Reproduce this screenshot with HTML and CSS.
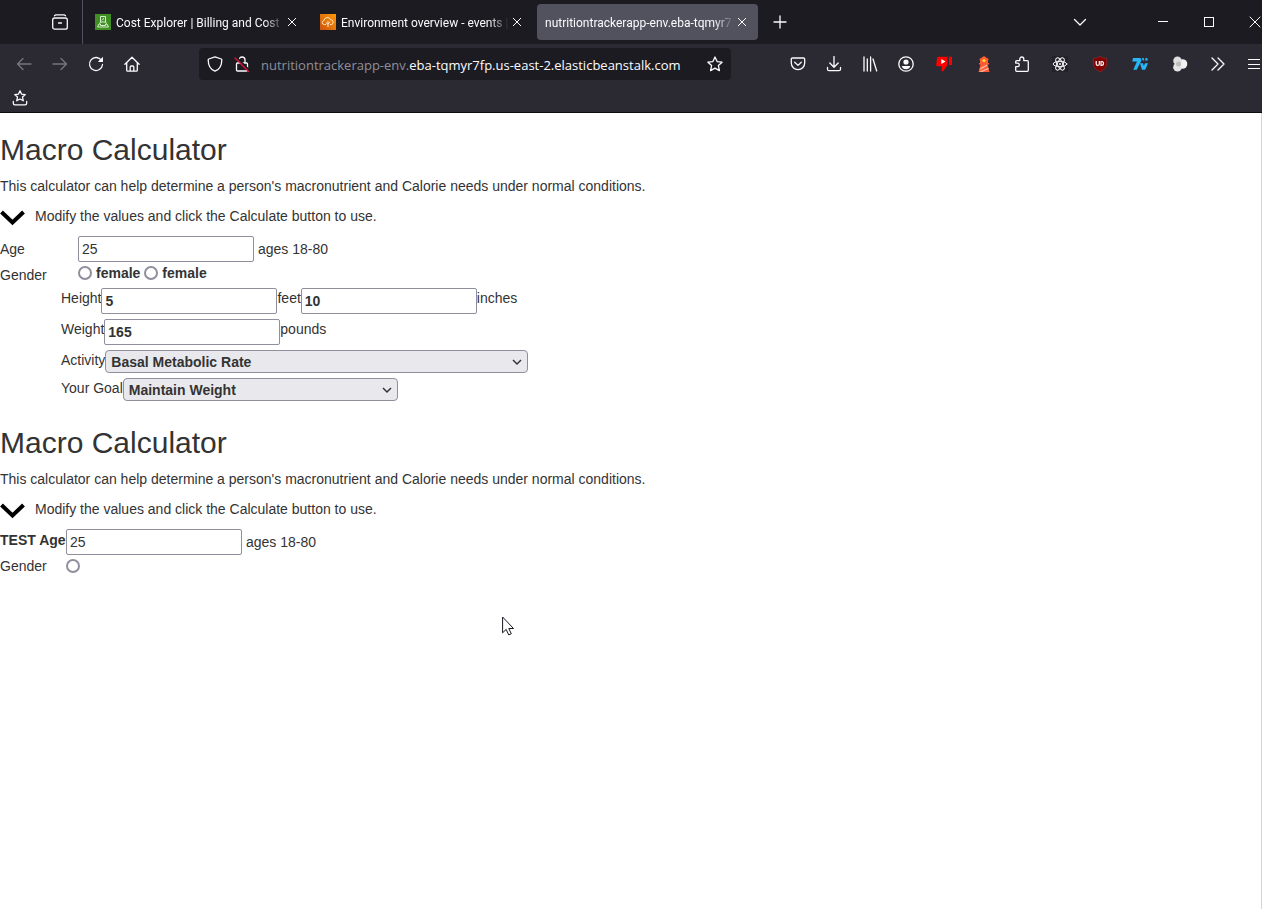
FILE: index.html
```html
<!DOCTYPE html>
<html lang="en">
<head>
<meta charset="utf-8">
<title>Macro Calculator</title>
<link rel="stylesheet" href="styles.css">
</head>
<body>
<header class="browser">
  <div class="tabbar">
    <div class="tabbar-lead">
      <button class="tool" aria-label="Firefox View"><svg class="icon" viewBox="0 0 16 16"><rect x=".7" y="4" width="14.6" height="11.2" rx="2"/><path d="M2.5 1.8 Q3 .8 4.2 .8 H11.8 Q13 .8 13.5 1.8M6.5 9h3"/></svg></button>
    </div>
    <div class="tabs">
      <div class="tab">
        <svg class="favicon" viewBox="0 0 16 16"><rect width="16" height="16" fill="#3f8f25"/><g fill="none" stroke="#d8efcc" stroke-width="1"><path d="M5.500 8V2.500h5V8M4.500 9.500l1-1.500h5l1 1.500M2.500 13l1.500-3h1.500v1.500h5V10H12l1.500 3zM7 6.500l2-2.500"/></g></svg>
        <span class="tab-title">Cost Explorer | Billing and Cost M</span>
        <button class="tab-close" aria-label="Close tab"><svg viewBox="0 0 10 10"><path d="M1 1l8 8M9 1l-8 8"/></svg></button>
      </div>
      <div class="tab">
        <svg class="favicon" viewBox="0 0 16 16"><defs><linearGradient id="amber" x1="0" y1="1" x2="1" y2="0"><stop stop-color="#c9520f"/><stop offset="1" stop-color="#ff9a06"/></linearGradient></defs><rect width="16" height="16" fill="url(#amber)"/><g fill="none" stroke="#ffe4c4"><path d="M6 10.500H4.500a2 2 0 0 1-.5-4 3.500 3.500 0 0 1 6.700-.8 2.500 2.500 0 0 1 1 4.800H10M8 13V7M8 10.500 5.800 8.500M8 10l2.200-2"/></g></svg>
        <span class="tab-title">Environment overview - events |</span>
        <button class="tab-close" aria-label="Close tab"><svg viewBox="0 0 10 10"><path d="M1 1l8 8M9 1l-8 8"/></svg></button>
      </div>
      <div class="tab tab-active">
        <span class="tab-title">nutritiontrackerapp-env.eba-tqmyr7</span>
        <button class="tab-close" aria-label="Close tab"><svg viewBox="0 0 10 10"><path d="M1 1l8 8M9 1l-8 8"/></svg></button>
      </div>
    </div>
    <button class="tool" aria-label="New tab"><svg class="icon" viewBox="0 0 16 16"><path d="M8 2v12M2 8h12"/></svg></button>
    <button class="tool list-tabs" aria-label="List all tabs"><svg class="icon" viewBox="0 0 16 16"><path d="M2.500 5.500 8 11l5.500-5.500"/></svg></button>
    <div class="window-controls">
      <button class="window-button" aria-label="Minimize"><svg class="icon sharp" viewBox="0 0 16 16"><path d="M3 7.500h10"/></svg></button>
      <button class="window-button" aria-label="Maximize"><svg class="icon sharp" viewBox="0 0 16 16"><path d="M3.500 3.500h9v9h-9z"/></svg></button>
      <button class="window-button" aria-label="Close window"><svg class="icon" viewBox="0 0 16 16"><path class="thin" d="M3 3l10 10M13 3 3 13"/></svg></button>
    </div>
  </div>
  <div class="toolbar">
    <nav class="tools">
      <button class="tool dim" aria-label="Back"><svg class="icon" viewBox="0 0 16 16"><path d="M15 8H1.500M7 2.500 1.500 8 7 13.500"/></svg></button>
      <button class="tool dim" aria-label="Forward"><svg class="icon" viewBox="0 0 16 16"><path d="M1 8h13.500M9 2.500 14.500 8 9 13.500"/></svg></button>
      <button class="tool" aria-label="Reload"><svg class="icon" viewBox="0 0 16 16"><path d="M13.500 4.500A6.500 6.500 0 1 0 14.500 8.500"/><path class="solid" d="M15 .8V6H9.800z"/></svg></button>
      <button class="tool" aria-label="Home"><svg class="icon" viewBox="0 0 16 16"><path d="M.9 8.200 8 1.300l7.100 6.900M2.700 7v7.200q0 1 1 1h8.600q1 0 1-1V7M6.200 15v-4q0-1 1-1h1.600q1 0 1 1v4"/></svg></button>
    </nav>
    <div class="urlbar">
      <svg class="icon" viewBox="0 0 16 16"><path d="M8 .9 14.300 3q.5.200.5.700C14.800 9.500 12.500 13.500 8 15.200 3.500 13.500 1.200 9.500 1.200 3.700q0-.5.500-.7z"/></svg>
      <svg class="icon" viewBox="0 0 16 16"><path d="M5 7V4a3 3 0 0 1 6 0v3M3.500 7h9q1 0 1 1v6q0 1-1 1h-9q-1 0-1-1V8q0-1 1-1z"/><path class="slash-gap" d="M2 1l13 13"/><path class="slash" d="M1 2l13.500 13.500"/></svg>
      <span class="url"><span class="url-dim">nutritiontrackerapp-env.</span>eba-tqmyr7fp.us-east-2.elasticbeanstalk.com</span>
      <button class="star" aria-label="Bookmark this page"><svg class="icon" viewBox="0 0 16 16"><path d="M8 1l2.100 4.600 5 .6-3.700 3.400 1 5L8 12.100l-4.400 2.500 1-5L.9 6.200l5-.6z"/></svg></button>
    </div>
    <div class="tools tools-end">
      <button class="tool" aria-label="Save to Pocket"><svg class="icon" viewBox="0 0 16 16"><path d="M2.500 2h11Q14.700 2 14.700 3.200V7a6.700 6.700 0 0 1-13.400 0V3.200Q1.300 2 2.500 2zM4.700 6.300 8 9.400l3.300-3.100"/></svg></button>
      <button class="tool" aria-label="Downloads"><svg class="icon" viewBox="0 0 16 16"><path d="M8 .5v10.500M3.800 7 8 11.200 12.200 7M1.500 11.500v1.700q0 1.500 1.500 1.500h10q1.500 0 1.500-1.500v-1.700"/></svg></button>
      <button class="tool" aria-label="Library"><svg class="icon" viewBox="0 0 16 16"><path d="M2 1v14M5.300 3v12M8.600 1v14M11 3l3.700 12"/></svg></button>
      <button class="tool" aria-label="Account"><svg class="icon" viewBox="0 0 16 16"><circle cx="8" cy="8" r="7.200"/><circle class="solid" cx="8" cy="6" r="2.600"/><path class="solid" d="M3.700 10h8.600q-1 3.200-4.300 3.200T3.700 10z"/></svg></button>
      <button class="tool wide" aria-label="Return YouTube Dislike"><svg class="icon bare" viewBox="0 0 16 16"><path fill="#f00" d="M2.500.8H11.500v8.200L7 15.500q-2-.5-1.500-2.500l.7-2.700H1.500Q0 10 .2 8.500L1 2.500Q1.200.8 2.500.8zM13 .8h3V9h-3z"/><path fill="#fff" d="M5.300 3v5L9.500 5.500z"/></svg></button>
      <button class="tool wide" aria-label="Lighthouse"><svg class="icon bare" viewBox="0 0 16 16"><path fill="#ff5a32" d="M8 0l4.500 3v1H12v3H4V4h-.5V3zM3 7h10v1.500H3zM4.500 8.500h7L13.500 16h-11z"/><circle cx="8" cy="4.600" r="1.700" fill="#ffd22e"/><path fill="#ffb39c" d="M4.300 12 11 8.500l.5 1.300-7.500 4zM3 15.800l9.500-4 .3 1.300L6 16z"/></svg></button>
      <button class="tool" aria-label="Extensions"><svg class="icon" viewBox="0 0 16 16"><path d="M1.700 14.300V10.700H3.500a1.800 1.800 0 0 0 0-3.600H1.700V5.700q0-1 1-1H5.800V3a2 2 0 0 1 4 0v1.700h3.500q1 0 1 1v8.600q0 1-1 1H2.700q-1 0-1-1z"/></svg></button>
      <button class="tool wide" aria-label="React Developer Tools"><svg class="icon atom" viewBox="0 0 16 16"><rect class="atom-back" width="16" height="16"/><ellipse cx="8" cy="8" rx="6.800" ry="2.700"/><ellipse cx="8" cy="8" rx="6.800" ry="2.700" transform="rotate(60 8 8)"/><ellipse cx="8" cy="8" rx="6.800" ry="2.700" transform="rotate(120 8 8)"/><circle class="solid" cx="8" cy="8" r="1"/></svg></button>
      <button class="tool wide" aria-label="uBlock Origin"><svg class="icon bare" viewBox="0 0 16 16"><path fill="#800000" stroke="#a33" stroke-width=".5" d="M8 .4Q11 2.400 14.700 2.400V8q0 4.500-6.700 7.700Q1.300 12.500 1.300 8V2.400Q5 2.400 8 .4z"/><path fill="none" stroke="#fff" stroke-width="1.200" d="M4.200 5v3q0 1.400 1.500 1.400T7.300 8V5M9 5.500v3.900h1a2 2 0 0 0 0-3.900z"/></svg></button>
      <button class="tool wide" aria-label="7TV"><svg class="icon bare" viewBox="0 0 16 16"><path fill="#29b6f6" d="M1 2h7.500l1 2.200-4.800 9.600H1.300L5 5.500H.2zM8 7.300h3l.8 2.800L13 7.300h3l-2.800 6.500H10zM9.800 2h1.800l.8 2.500h-1.600zM13.500 2h1.800l.5 2.500h-2.600z"/></svg></button>
      <button class="tool wide" aria-label="Extension"><svg class="icon bare" viewBox="0 0 16 16"><circle cx="10.500" cy="8" r="4.800" fill="#f2f2f2"/><circle cx="5.500" cy="4.800" r="4.300" fill="#dedede"/><circle cx="5.500" cy="11.200" r="4.300" fill="#e4e4e4"/><circle cx="6.500" cy="8" r="2.500" fill="#bdbdbd"/></svg></button>
      <button class="tool" aria-label="More tools"><svg class="icon" viewBox="0 0 16 16"><path d="M2 2l6 6-6 6M8 2l6 6-6 6"/></svg></button>
      <button class="tool" aria-label="Open application menu"><svg class="icon sharp" viewBox="0 0 16 16"><path d="M2 3.500h12M2 8.500h12M2 12.500h12"/></svg></button>
    </div>
  </div>
  <div class="bookmarks">
    <button class="tool" aria-label="Bookmarks"><svg class="icon" viewBox="0 0 16 16"><path d="M8 .8l1.600 3.400 3.700.4-2.800 2.500.8 3.700L8 9l-3.300 1.800.8-3.700L2.700 4.600l3.700-.4zM1.300 11.500v1.700q0 1.700 1.700 1.700h10q1.700 0 1.700-1.700v-1.700"/></svg></button>
  </div>
</header>
<main class="page">
  <section class="calculator">
    <h2>Macro Calculator</h2>
    <p>This calculator can help determine a person's macronutrient and Calorie needs under normal conditions.</p>
    <p class="hint"><svg class="hint-arrow" viewBox="0 0 25 20"><path d="M1.500 6l11 10.500L23.500 6"/></svg>Modify the values and click the Calculate button to use.</p>
    <form>
      <div class="row row-age">
        <label class="name" for="age">Age</label>
        <input class="field" id="age" type="text" value="25">
        <span class="note">ages 18-80</span>
      </div>
      <div class="row row-gender">
        <span class="name">Gender</span>
        <label class="choice"><input type="radio" name="gender">female</label>
        <label class="choice"><input type="radio" name="gender">female</label>
      </div>
      <div class="measures">
        <div class="row">
          <label for="feet">Height</label><input class="field strong" id="feet" type="text" value="5">
          <label for="inches">feet</label><input class="field strong" id="inches" type="text" value="10"><span>inches</span>
        </div>
        <div class="row">
          <label for="pounds">Weight</label><input class="field strong" id="pounds" type="text" value="165"><span>pounds</span>
        </div>
        <div class="row">
          <label for="activity">Activity</label>
          <span class="picker picker-wide"><select id="activity"><option>Basal Metabolic Rate</option></select><svg viewBox="0 0 10 10"><path d="M1 3l4 4 4-4"/></svg></span>
        </div>
        <div class="row">
          <label for="goal">Your Goal</label>
          <span class="picker"><select id="goal"><option>Maintain Weight</option></select><svg viewBox="0 0 10 10"><path d="M1 3l4 4 4-4"/></svg></span>
        </div>
      </div>
    </form>
  </section>
  <section class="calculator">
    <h2>Macro Calculator</h2>
    <p>This calculator can help determine a person's macronutrient and Calorie needs under normal conditions.</p>
    <p class="hint"><svg class="hint-arrow" viewBox="0 0 25 20"><path d="M1.500 6l11 10.500L23.500 6"/></svg>Modify the values and click the Calculate button to use.</p>
    <form class="test">
      <div class="row">
        <label class="name strong" for="test-age">TEST Age</label>
        <input class="field" id="test-age" type="text" value="25">
        <span class="note">ages 18-80</span>
      </div>
      <div class="row test-gender">
        <label class="name" for="test-gender">Gender</label>
        <input class="radio" type="radio" id="test-gender">
      </div>
    </form>
  </section>
</main>
<svg class="pointer" viewBox="0 0 13 20"><path d="M.6 1v15.800l3.600-3.400 2.500 5.500 2.600-1.100-2.500-5.300h4.700z"/></svg>
</body>
</html>
```
FILE: styles.css
```css
* { box-sizing: border-box; }

body {
  margin: 0;
  min-height: 100vh;
  display: flex;
  flex-direction: column;
  overflow: hidden;
  background: #fff;
  color: #333;
  font: 14px/20px "Liberation Sans", Arial, sans-serif;
}

button { margin: 0; padding: 0; border: 0; background: none; color: inherit; font: inherit; }

/* Browser frame */
.browser {
  overflow: hidden;
  background: #2b2a33;
  border-bottom: 1px solid #0c0c0d;
  color: #fbfbfe;
  font: 12px/16px Roboto, "Noto Sans", sans-serif;
}
.icon {
  display: block;
  flex: none;
  width: 16px;
  height: 16px;
  fill: none;
  stroke: currentColor;
  stroke-width: 1.3;
  stroke-linecap: round;
  stroke-linejoin: round;
}
.icon .solid { fill: currentColor; stroke: none; }
.icon .thin { stroke-width: 1; }
.sharp { shape-rendering: crispEdges; stroke-width: 1; stroke-linecap: butt; }
.bare { stroke: none; stroke-linecap: butt; }
.atom { stroke-width: 1; }
.atom .atom-back { fill: #222229; stroke: none; }
.icon .slash-gap { stroke: #1c1b22; stroke-width: 2; }
.icon .slash { stroke: #e0113c; }

.tool {
  display: flex;
  flex: none;
  width: 36px;
  height: 32px;
  align-items: center;
  justify-content: center;
}
.wide { width: 40px; }
.dim { color: #77767e; }

.tabbar { display: flex; height: 44px; align-items: center; background: #1c1b22; }
.tabbar-lead {
  display: flex;
  flex: none;
  width: 83px;
  height: 44px;
  padding-left: 42px;
  align-items: center;
  border-right: 1px solid #52525e;
}
.tabs { display: flex; flex: none; gap: 4px; margin: 0 4px; }
.tab { display: flex; width: 221px; height: 36px; padding: 0 8px; align-items: center; gap: 5px; border-radius: 4px; }
.tab-active { background: #52525e; }
.favicon { flex: none; width: 16px; height: 16px; }
.tab-title {
  flex: 1;
  min-width: 0;
  padding-top: 2px;
  overflow: hidden;
  white-space: nowrap;
  mask-image: linear-gradient(to left, transparent, #000 20px);
}
.tab-close { flex: none; width: 16px; height: 16px; margin-left: -5px; padding: 3px; }
.tab-close svg { display: block; width: 10px; height: 10px; fill: none; stroke: currentColor; }
.list-tabs { margin-left: auto; }
.window-controls { display: flex; margin: 0 -16px 0 42px; }
.window-button { display: flex; width: 46px; height: 44px; align-items: center; justify-content: center; }

.toolbar { display: flex; height: 40px; padding-left: 6px; align-items: center; justify-content: space-between; }
.tools { display: flex; flex: none; }
.tools-end { margin-right: -10px; }
.urlbar {
  display: flex;
  flex: 1;
  height: 32px;
  min-width: 0;
  margin: 0 49px;
  padding: 0 8px;
  gap: 11px;
  align-items: center;
  border-radius: 4px;
  background: #1c1b22;
  font: 13px/16px "Open Sans", "Noto Sans", sans-serif;
}
.url { flex: 1; min-width: 0; padding-top: 2px; overflow: hidden; white-space: nowrap; }
.url-dim { color: #8f8f98; }
.bookmarks { display: flex; height: 28px; padding-left: 2px; align-items: center; }

/* Page */
.page { flex: 1; border-right: 1px solid #d5d5d8; padding-top: 20px; }
.calculator { margin-bottom: 25px; }
h2 { margin: 0 0 10px; font-size: 30px; line-height: 33px; font-weight: 400; }
p { margin: 0 0 10px; }
.hint { display: flex; gap: 10px; }
.hint-arrow { width: 25px; height: 20px; fill: none; stroke: #000; stroke-width: 4; }
.row { display: flex; align-items: flex-start; }
.row-age { line-height: 26px; }
.row-gender { height: 26px; line-height: 22px; }
.name { width: 78px; }
.row-gender .name { line-height: 26px; }
.note { margin-left: 4px; line-height: 26px; }
.strong { font-weight: 700; }
.field {
  width: 176px;
  height: 26px;
  padding: 2px 3px;
  border: 1px solid #8f8f9d;
  border-radius: 2px;
  background: #fff;
  color: #333;
  font-family: inherit;
  font-size: 14px;
}
.choice { display: flex; align-items: center; gap: 4px; margin-right: 4px; font-weight: 700; line-height: 22px; }
input[type="radio"] {
  appearance: none;
  width: 14px;
  height: 14px;
  margin: 0;
  border: 2px solid #8f8f9d;
  border-radius: 50%;
  background: #fff;
}
.measures { display: flex; flex-direction: column; gap: 5px; padding-left: 61px; }
.picker { position: relative; width: 275px; }
.picker-wide { width: 423px; }
.picker select {
  appearance: none;
  display: block;
  width: 100%;
  height: 23px;
  padding: 0 5px;
  border: 1px solid #8f8f9d;
  border-radius: 4px;
  background: #e9e9ed;
  color: #333;
  font: 700 14px/20px "Liberation Sans", Arial, sans-serif;
}
.picker svg {
  position: absolute;
  top: 7px;
  right: 6px;
  width: 10px;
  height: 10px;
  fill: none;
  stroke: #333;
  stroke-width: 1.5;
  pointer-events: none;
}
.test .name { width: 66px; line-height: 22px; white-space: nowrap; }
.test-gender { align-items: center; }

.pointer {
  position: absolute;
  left: 502px;
  top: 616px;
  width: 13px;
  height: 20px;
  fill: #fff;
  stroke: #15151f;
  pointer-events: none;
}
```
